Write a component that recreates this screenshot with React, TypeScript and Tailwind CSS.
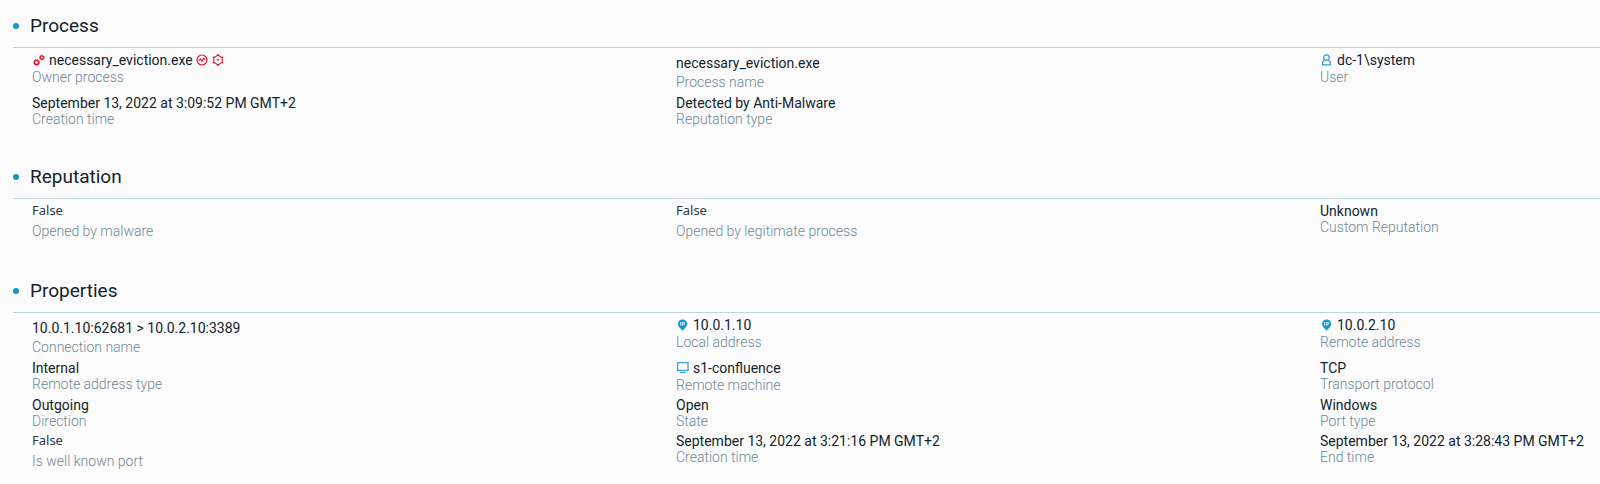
import type { ReactNode } from 'react';
import clsx from 'clsx';

type Kind = 'compact' | 'icon' | 'name' | 'bool';

interface Field {
  label: string;
  value: string;
  kind?: Kind;
  before?: ReactNode;
  after?: ReactNode;
}

interface SectionData {
  title: string;
  rows: Field[][];
}

function ProcessIcon() {
  return (
    <svg className="size-3.5 shrink-0" viewBox="0 0 14 14" fill="none" stroke="#e0142f">
      <circle cx="4.6" cy="9.4" r="2.1" strokeWidth="1.5" />
      <circle cx="4.6" cy="9.4" r="3" strokeWidth="0.7" strokeDasharray="1.1 1.26" />
      <circle cx="9.8" cy="4.6" r="1.7" strokeWidth="1.4" />
      <circle cx="9.8" cy="4.6" r="2.6" strokeWidth="0.7" strokeDasharray="1 1.04" />
    </svg>
  );
}

function ActivityIcon() {
  return (
    <svg className="size-3" viewBox="0 0 12 12" fill="none" stroke="#e0142f" strokeLinejoin="round">
      <circle cx="6" cy="6" r="5" strokeWidth="1.2" />
      <path d="M2.6 7 4.4 4.8l1.6 2.6 1.6-3.2 1.6 1.6" strokeWidth="1.1" />
    </svg>
  );
}

function MalwareIcon() {
  return (
    <svg className="size-3.5" viewBox="0 0 14 14" fill="none" stroke="#e0142f">
      <path d="M7 2.2 11.2 4.6v4.8L7 11.8 2.8 9.4V4.6z" strokeWidth="1.1" />
      <path d="M5.7 6.1h2.6L7 8.2z" fill="#e0142f" stroke="none" />
      <g fill="#e0142f" stroke="none">
        <circle cx="7" cy="1.7" r="0.8" />
        <circle cx="7" cy="12.3" r="0.8" />
        <circle cx="2.4" cy="4.4" r="0.8" />
        <circle cx="11.6" cy="4.4" r="0.8" />
        <circle cx="2.4" cy="9.6" r="0.8" />
        <circle cx="11.6" cy="9.6" r="0.8" />
      </g>
    </svg>
  );
}

function UserIcon() {
  return (
    <svg className="size-3.5 shrink-0" viewBox="0 0 14 14" fill="none" stroke="#2a9bd6" strokeWidth="1.2">
      <circle cx="6.4" cy="4.6" r="2.8" />
      <path d="M4.4 6.6C3 7.8 2.4 9.4 2.4 11.8h8c0-2.4-.6-4-2-5.2" />
    </svg>
  );
}

function PinIcon() {
  return (
    <svg className="size-3.5 shrink-0" viewBox="0 0 14 14">
      <path d="M6.6 1.4A4.6 4.6 0 0 1 11.2 6c0 2.7-2.6 4.2-4.6 6.8C4.6 10.2 2 8.700 2 6a4.6 4.6 0 0 1 4.6-4.6z" fill="#1595d3" />
      <path d="M4.7 4v3.600M6.600 7.6V4.4h1.2a1 1 0 0 1 0 2H6.6" fill="none" stroke="#fff" strokeWidth="0.9" />
    </svg>
  );
}

function MonitorIcon() {
  return (
    <svg className="size-3.5 shrink-0" viewBox="0 0 14 14" fill="none" stroke="#3aa3da">
      <path d="M1.6 1.6h10.4v7.800H1.6z" strokeWidth="1.3" />
      <path d="M4 11.500h5.600" strokeWidth="1.4" />
    </svg>
  );
}

const sections: SectionData[] = [
  {
    title: 'Process',
    rows: [
      [
        {
          label: 'Owner process',
          value: 'necessary_eviction.exe',
          kind: 'icon',
          before: <ProcessIcon />,
          after: (
            <>
              <ActivityIcon />
              <MalwareIcon />
            </>
          ),
        },
        { label: 'Process name', value: 'necessary_eviction.exe', kind: 'name' },
        { label: 'User', value: 'dc-1\\system', kind: 'icon', before: <UserIcon /> },
      ],
      [
        { label: 'Creation time', value: 'September 13, 2022 at 3:09:52 PM GMT+2' },
        { label: 'Reputation type', value: 'Detected by Anti-Malware' },
      ],
    ],
  },
  {
    title: 'Reputation',
    rows: [
      [
        { label: 'Opened by malware', value: 'False', kind: 'bool' },
        { label: 'Opened by legitimate process', value: 'False', kind: 'bool' },
        { label: 'Custom Reputation', value: 'Unknown' },
      ],
    ],
  },
  {
    title: 'Properties',
    rows: [
      [
        { label: 'Connection name', value: '10.0.1.10:62681 > 10.0.2.10:3389', kind: 'name' },
        { label: 'Local address', value: '10.0.1.10', kind: 'icon', before: <PinIcon /> },
        { label: 'Remote address', value: '10.0.2.10', kind: 'icon', before: <PinIcon /> },
      ],
      [
        { label: 'Remote address type', value: 'Internal' },
        { label: 'Remote machine', value: 's1-confluence', kind: 'icon', before: <MonitorIcon /> },
        { label: 'Transport protocol', value: 'TCP' },
      ],
      [
        { label: 'Direction', value: 'Outgoing' },
        { label: 'State', value: 'Open' },
        { label: 'Port type', value: 'Windows' },
      ],
      [
        { label: 'Is well known port', value: 'False', kind: 'bool' },
        { label: 'Creation time', value: 'September 13, 2022 at 3:21:16 PM GMT+2' },
        { label: 'End time', value: 'September 13, 2022 at 3:28:43 PM GMT+2' },
      ],
    ],
  },
];

const padding: Record<Kind, string> = {
  compact: 'pt-[4px]',
  icon: 'pt-[3px]',
  name: 'pt-[5px]',
  bool: 'pt-0',
};

const valueStyle: Record<Kind, string> = {
  compact: 'text-[14px] leading-[16px] text-[#13232b]',
  icon: 'text-[14px] leading-[18px] text-[#13232b]',
  name: 'text-[14px] leading-[20px] text-[#13232b]',
  bool: "font-['Noto_Sans',sans-serif] text-[13px] leading-[22px] text-[#2b3a42]",
};

const labelStyle: Record<Kind, string> = {
  compact: 'leading-[16px]',
  icon: 'leading-[16px]',
  name: 'leading-[18px]',
  bool: 'leading-[20px]',
};

function FieldCell({ label, value, kind = 'compact', before, after }: Field) {
  return (
    <div className={clsx('flex flex-col-reverse justify-end whitespace-nowrap', padding[kind])}>
      <dt className={clsx('text-[14px] font-light text-[#6f8894]', labelStyle[kind])}>{label}</dt>
      <dd className={clsx('flex items-center gap-[3px]', valueStyle[kind])}>
        {before}
        <span>{value}</span>
        {after && <span className="flex items-center gap-[3px]">{after}</span>}
      </dd>
    </div>
  );
}

function Section({ title, rows }: SectionData) {
  return (
    <section className="mb-[29px]">
      <header className="ml-[13px] flex h-[43px] items-center gap-[11px] border-b border-[#c3d3dc]">
        <span className="size-1.5 rounded-full bg-[#1595d3]" />
        <h2 className="text-[19px] leading-6 text-[#13232b]">{title}</h2>
      </header>
      <dl className="pl-8">
        {rows.map((row, i) => (
          <div key={i} className="grid grid-cols-[23fr_23fr_10fr]">
            {row.map((field) => (
              <FieldCell key={field.label} {...field} />
            ))}
          </div>
        ))}
      </dl>
    </section>
  );
}

export default function App() {
  return (
    <main className="min-h-screen overflow-hidden bg-[#fcfcfc] pt-[5px] font-['Roboto',sans-serif]">
      {sections.map((section) => (
        <Section key={section.title} {...section} />
      ))}
    </main>
  );
}
